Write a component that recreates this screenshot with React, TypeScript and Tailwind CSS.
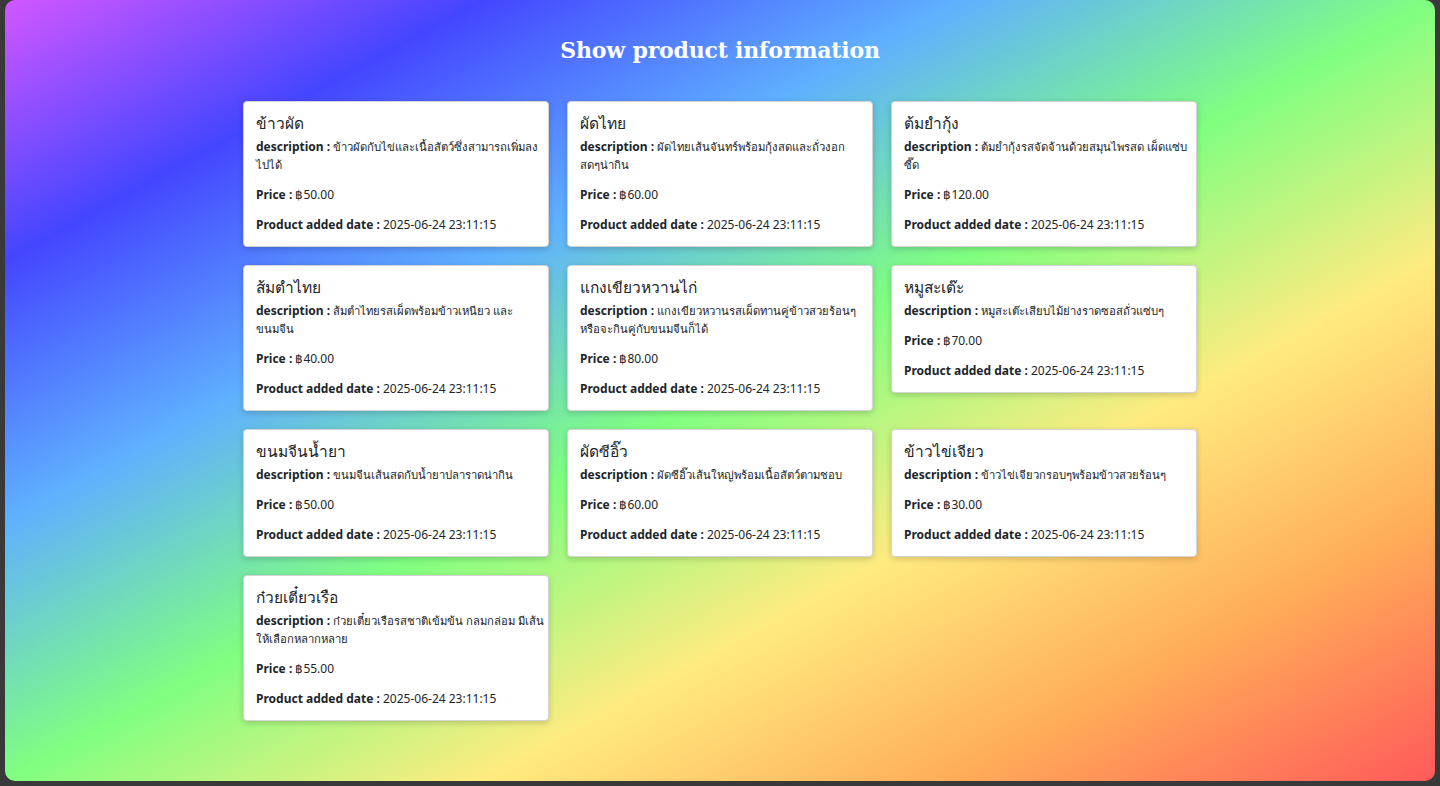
import { FC } from "react"

interface Product {
    name: string
    description: string[]
    price: string
}

const products: Product[] = [
    { name: "ข้าวผัด", description: ["ข้าวผัดกับไข่และเนื้อสัตว์ซึ่งสามารถเพิ่มลง", "ไปได้"], price: "฿50.00" },
    { name: "ผัดไทย", description: ["ผัดไทยเส้นจันทร์พร้อมกุ้งสดและถั่วงอก", "สดๆน่ากิน"], price: "฿60.00" },
    { name: "ต้มยำกุ้ง", description: ["ต้มยำกุ้งรสจัดจ้านด้วยสมุนไพรสด เผ็ดแซ่บ", "ซี๊ด"], price: "฿120.00" },
    { name: "ส้มตำไทย", description: ["ส้มตำไทยรสเผ็ดพร้อมข้าวเหนียว และ", "ขนมจีน"], price: "฿40.00" },
    { name: "แกงเขียวหวานไก่", description: ["แกงเขียวหวานรสเผ็ดทานคู่ข้าวสวยร้อนๆ", "หรือจะกินคู่กับขนมจีนก็ได้"], price: "฿80.00" },
    { name: "หมูสะเต๊ะ", description: ["หมูสะเต๊ะเสียบไม้ย่างราดซอสถั่วแซ่บๆ"], price: "฿70.00" },
    { name: "ขนมจีนน้ำยา", description: ["ขนมจีนเส้นสดกับน้ำยาปลาราดน่ากิน"], price: "฿50.00" },
    { name: "ผัดซีอิ๊ว", description: ["ผัดซีอิ๊วเส้นใหญ่พร้อมเนื้อสัตว์ตามชอบ"], price: "฿60.00" },
    { name: "ข้าวไข่เจียว", description: ["ข้าวไข่เจียวกรอบๆพร้อมข้าวสวยร้อนๆ"], price: "฿30.00" },
    { name: "ก๋วยเตี๋ยวเรือ", description: ["ก๋วยเตี๋ยวเรือรสชาติเข้มข้น กลมกล่อม มีเส้น", "ให้เลือกหลากหลาย"], price: "฿55.00" },
]

const Card: FC<{ data: Product }> = ({ data }) => {
    return (
        <div className="flex flex-col gap-3 bg-white rounded-[4px] border border-[#d4d4d4] shadow-[0_2px_6px_rgba(0,0,0,0.18)] px-[12px] pt-[9px] pb-[12px] text-[#212529]">
            <div>
                <h5 className="text-[15.5px] leading-[24px] font-medium mb-[3px]">{data.name}</h5>
                <p className="text-[12px] leading-[18px] whitespace-nowrap">
                    <span className="font-bold">description : </span>
                    {data.description.map((line, i) => (
                        <span key={i} className="text-[11.3px]">
                            {i > 0 && <br />}
                            {line}
                        </span>
                    ))}
                </p>
            </div>
            <p className="text-[12px] leading-[18px]">
                <span className="font-bold">Price : </span>
                {data.price}
            </p>
            <p className="text-[12px] leading-[18px]">
                <span className="font-bold">Product added date : </span>
                2025-06-24 23:11:15
            </p>
        </div>
    )
}

export default function App() {
    return (
        <div className="h-[786px] bg-[#393939] px-[5px] pb-[5px] overflow-hidden">
            <div
                className="h-full rounded-[10px] bg-[linear-gradient(to_bottom_right,#d257ff,#4446ff,#5fb0ff,#80ff80,#ffeb80,#ffab58,#ff5a5a)] pt-[34px]"
                style={{ fontFamily: '"Noto Sans", "Liberation Sans", sans-serif' }}
            >
                <h1
                    className="text-center text-white text-[22px] leading-[32px] font-black tracking-[-0.2px]"
                    style={{ fontFamily: '"DejaVu Serif", "Liberation Serif", serif' }}
                >
                    Show product information
                </h1>
                <div className="grid grid-cols-3 items-start gap-[18px] w-[954px] mx-auto mt-[35px]">
                    {products.map((p, i) => (
                        <Card key={i} data={p} />
                    ))}
                </div>
            </div>
        </div>
    )
}
